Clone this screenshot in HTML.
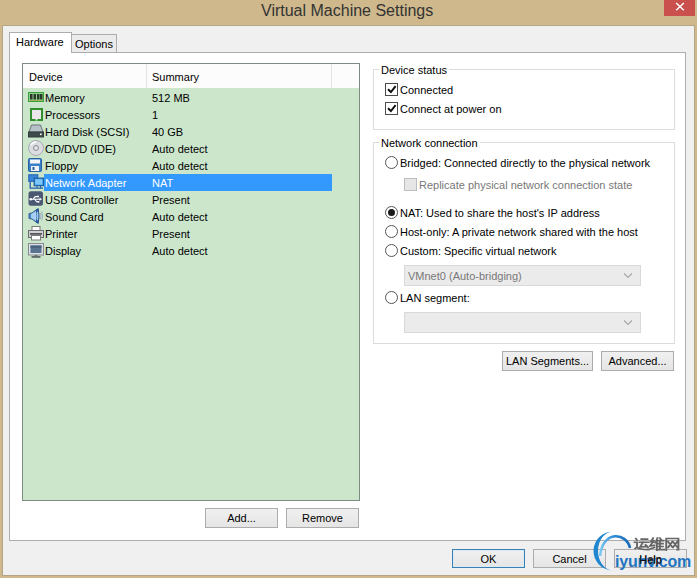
<!DOCTYPE html>
<html><head><meta charset="utf-8">
<style>
*{margin:0;padding:0;box-sizing:border-box}
html,body{width:697px;height:578px;overflow:hidden;background:#CEB88C}
body{position:relative;font-family:"Liberation Sans",sans-serif;font-size:11px;color:#000}
.a{position:absolute}
.t{position:absolute;white-space:nowrap;line-height:13px;height:13px}
#client{position:absolute;left:2px;top:25px;width:693px;height:551px;background:#F0F0F0;border:1px solid #B4A684}
#title{left:261px;top:1px;font-size:16px;line-height:20px;color:#333;height:20px}
#close{left:664px;top:0;width:31px;height:16px;background:#C9504D}
.tabpage{left:9px;top:52px;width:677px;height:489px;background:#fff;border:1px solid #ADADAD}
.tab1{left:9px;top:32px;width:63px;height:21px;background:#fff;border:1px solid #ADADAD;border-bottom:none}
.tab2{left:71px;top:34px;width:46px;height:19px;background:#EBEBEB;border:1px solid #ADADAD}
.list{left:22px;top:63px;width:338px;height:438px;background:#CCE6CC;border:1px solid #7E8A84}
.hdr{left:23px;top:64px;width:336px;height:24px;background:#FCFCFC}
.vsep{width:1px;background:#E3E5E3}
.sel{left:44px;top:174px;width:288px;height:17px;background:#3399FF}
.grp{border:1px solid #DCDCDC}
.lbl{background:#fff;padding:0 2px}
.cb{width:13px;height:13px;border:1px solid #4a4a4a;background:#fff}
.cbd{width:13px;height:13px;border:1px solid #BCBCBC;background:#E6E6E6}
.rb{width:13px;height:13px;border:1px solid #555;border-radius:50%;background:#fff}
.dis{color:#787878}
.combo{width:237px;height:21px;background:#EBEBEB;border:1px solid #D9D9D9}
.btn{height:20px;width:73px;background:linear-gradient(#F0F0F0,#E5E5E5);border:1px solid #ACACAC;text-align:center;line-height:18px;color:#000}
</style></head><body>
<div id="client"></div>
<div class="t" id="title">Virtual Machine Settings</div>
<div class="a" id="close"><svg width="31" height="16" style="position:absolute;left:0;top:0"><path d="M12.2 3 L19.8 10.2 M19.8 3 L12.2 10.2" stroke="#fff" stroke-width="1.5"/></svg></div>

<div class="a tabpage"></div>
<div class="a tab2"></div>
<div class="a tab1"></div>
<div class="t" style="left:16px;top:36px">Hardware</div>
<div class="t" style="left:75px;top:38px">Options</div>

<div class="a list"></div>
<div class="a hdr"></div>
<div class="a vsep" style="left:146px;top:64px;height:24px"></div>
<div class="a vsep" style="left:331px;top:64px;height:24px"></div>
<div class="t" style="left:29px;top:71px">Device</div>
<div class="t" style="left:152px;top:71px">Summary</div>
<div class="a sel"></div>
<svg class="a" style="left:28px;top:89px" width="16" height="16" viewBox="0 0 16 16"><rect x="0.5" y="3.5" width="15" height="9" fill="#8fd08f" stroke="#38a038"/><rect x="2" y="5" width="2.5" height="5.5" fill="#2b3b2b"/><rect x="5.5" y="5" width="2.5" height="5.5" fill="#2b3b2b"/><rect x="9" y="5" width="2.5" height="5.5" fill="#2b3b2b"/><rect x="12" y="5" width="2.5" height="5.5" fill="#2b3b2b"/><rect x="1.5" y="11.2" width="13" height="0.8" fill="#b0a850"/></svg>
<div class="t" style="left:45px;top:92px;color:#000">Memory</div>
<div class="t" style="left:152px;top:92px;color:#000">512 MB</div>
<svg class="a" style="left:28px;top:106px" width="16" height="16" viewBox="0 0 16 16"><rect x="3" y="3" width="11" height="11" fill="#ebe6ea" stroke="#2f8f2f" stroke-width="2"/><rect x="7.5" y="13" width="2" height="1.5" fill="#cde6cc"/></svg>
<div class="t" style="left:45px;top:109px;color:#000">Processors</div>
<div class="t" style="left:152px;top:109px;color:#000">1</div>
<svg class="a" style="left:28px;top:123px" width="16" height="16" viewBox="0 0 16 16"><path d="M3.5 2 H12.5 L15 9 H1 Z" fill="#b8c0c8" stroke="#6a747a" stroke-width="1"/><rect x="0.5" y="9" width="15" height="5" fill="#3e4a4c" stroke="#323c3e" stroke-width="1"/><rect x="12" y="10.5" width="1.6" height="1.6" fill="#fff"/></svg>
<div class="t" style="left:45px;top:126px;color:#000">Hard Disk (SCSI)</div>
<div class="t" style="left:152px;top:126px;color:#000">40 GB</div>
<svg class="a" style="left:28px;top:140px" width="16" height="16" viewBox="0 0 16 16"><circle cx="8" cy="8" r="7.5" fill="#dcdde2" stroke="#a8aab2" stroke-width="1"/><path d="M3 5 A6 6 0 0 1 8 2" stroke="#fff" stroke-width="1.5" fill="none"/><circle cx="8" cy="8" r="2.6" fill="#c8cad0" stroke="#9a9ca4" stroke-width="1"/><circle cx="8" cy="8" r="1.1" fill="#f4f4f6"/></svg>
<div class="t" style="left:45px;top:143px;color:#000">CD/DVD (IDE)</div>
<div class="t" style="left:152px;top:143px;color:#000">Auto detect</div>
<svg class="a" style="left:28px;top:157px" width="16" height="16" viewBox="0 0 16 16"><rect x="0.5" y="1.5" width="13" height="13" rx="1" fill="#3a80c8" stroke="#2a60a0" stroke-width="1"/><rect x="2" y="2.5" width="10" height="4" fill="#f2f4f8"/><rect x="3" y="9" width="8" height="5" fill="#f0f2f6"/><rect x="4.5" y="10" width="2" height="3" fill="#2a5c9c"/></svg>
<div class="t" style="left:45px;top:160px;color:#000">Floppy</div>
<div class="t" style="left:152px;top:160px;color:#000">Auto detect</div>
<svg class="a" style="left:28px;top:174px" width="16" height="16" viewBox="0 0 16 16"><rect x="0.8" y="0.8" width="9" height="6.5" fill="#3a86d6" stroke="#2a6cb8" stroke-width="1.2"/><path d="M2.2 7.5 V14.2 H15" stroke="#1f5ea8" stroke-width="1.3" fill="none"/><rect x="6.2" y="4.2" width="9.2" height="7.4" fill="#5ab4f2" stroke="#1f5ea8" stroke-width="1.3"/><rect x="7.5" y="5.5" width="6.6" height="4.8" fill="#7cc8f6"/><path d="M9 12 V14 M12.5 12 V14" stroke="#1f5ea8" stroke-width="1"/></svg>
<div class="t" style="left:45px;top:177px;color:#fff">Network Adapter</div>
<div class="t" style="left:152px;top:177px;color:#fff">NAT</div>
<svg class="a" style="left:28px;top:191px" width="16" height="16" viewBox="0 0 16 16"><rect x="0.5" y="0.3" width="14.5" height="14.5" rx="2.5" fill="#4b5872"/><path d="M3 8.2 H12 M5.2 8.2 L7.2 5.6 H9.3 M6.8 8.2 L8.6 10.8 H10" stroke="#fff" stroke-width="1.1" fill="none"/><circle cx="2.8" cy="8.2" r="1.3" fill="#fff"/><circle cx="10" cy="5.6" r="1" fill="#fff"/><rect x="9.6" y="10" width="1.7" height="1.7" fill="#fff"/><path d="M11.5 6.6 L14 8.2 L11.5 9.8 Z" fill="#fff"/></svg>
<div class="t" style="left:45px;top:194px;color:#000">USB Controller</div>
<div class="t" style="left:152px;top:194px;color:#000">Present</div>
<svg class="a" style="left:28px;top:208px" width="16" height="16" viewBox="0 0 16 16"><path d="M1 5.5 L4 5 L9.5 0.8 L10.5 0.8 V15.2 L9.5 15.2 L4 11 L1 10.5 Z" fill="#4a88c8" stroke="#2a5a94" stroke-width="0.9"/><ellipse cx="9.3" cy="8" rx="2.2" ry="7" fill="#2a5a94"/><path d="M3 6.2 L8 3 V13 L3 9.8 Z" fill="#a8d0f2"/><ellipse cx="9.4" cy="8" rx="1" ry="4.5" fill="#9cc8ee"/><path d="M12.3 5 Q13.6 8 12.3 11 M13.6 3.5 Q15.8 8 13.6 12.5" stroke="#98a6b8" stroke-width="0.9" fill="none"/></svg>
<div class="t" style="left:45px;top:211px;color:#000">Sound Card</div>
<div class="t" style="left:152px;top:211px;color:#000">Auto detect</div>
<svg class="a" style="left:28px;top:225px" width="16" height="16" viewBox="0 0 16 16"><rect x="4" y="1.5" width="8" height="4.5" fill="#fff" stroke="#7a7a7a" stroke-width="1"/><rect x="0.5" y="5.5" width="15" height="7" fill="#d0d0d4" stroke="#6a6a6e" stroke-width="1"/><rect x="2" y="8.2" width="12" height="1.4" fill="#383840"/><rect x="3.5" y="10.5" width="9" height="4.5" fill="#fff" stroke="#7a7a7a" stroke-width="1"/></svg>
<div class="t" style="left:45px;top:228px;color:#000">Printer</div>
<div class="t" style="left:152px;top:228px;color:#000">Present</div>
<svg class="a" style="left:28px;top:242px" width="16" height="16" viewBox="0 0 16 16"><rect x="0.5" y="1.5" width="15" height="11.5" fill="#dde0e4" stroke="#858b92" stroke-width="1"/><rect x="2.5" y="3.5" width="11" height="7.5" fill="#5a7490"/><rect x="2.5" y="3.5" width="11" height="2.5" fill="#4a6280"/><rect x="6.5" y="13" width="3" height="1.2" fill="#70767c"/><rect x="3.5" y="14.2" width="9" height="1.5" fill="#4a5056"/></svg>
<div class="t" style="left:45px;top:245px;color:#000">Display</div>
<div class="t" style="left:152px;top:245px;color:#000">Auto detect</div>

<div class="a btn" style="left:205px;top:508px">Add...</div>
<div class="a btn" style="left:286px;top:508px">Remove</div>

<div class="a grp" style="left:373px;top:69px;width:302px;height:61px"></div>
<div class="t lbl" style="left:379px;top:64px">Device status</div>
<div class="a cb" style="left:385px;top:83px"><svg width="11" height="11" style="position:absolute;left:0;top:0" viewBox="0 0 11 11"><path d="M2 5.2 L4.9 8 L9.6 2.1" stroke="#111" stroke-width="2" fill="none"/></svg></div>
<div class="a cb" style="left:385px;top:102px"><svg width="11" height="11" style="position:absolute;left:0;top:0" viewBox="0 0 11 11"><path d="M2 5.2 L4.9 8 L9.6 2.1" stroke="#111" stroke-width="2" fill="none"/></svg></div>
<div class="t" style="left:400px;top:84px">Connected</div>
<div class="t" style="left:400px;top:103px">Connect at power on</div>

<div class="a grp" style="left:373px;top:142px;width:302px;height:202px"></div>
<div class="t lbl" style="left:379px;top:137px">Network connection</div>
<div class="a rb" style="left:385px;top:156px"></div>
<div class="t" style="left:400px;top:157px">Bridged: Connected directly to the physical network</div>
<div class="a cbd" style="left:404px;top:178px"></div>
<div class="t dis" style="left:419px;top:179px">Replicate physical network connection state</div>
<div class="a rb" style="left:385px;top:206px"><div style="position:absolute;left:2px;top:2px;width:7px;height:7px;border-radius:50%;background:#1a1a1a"></div></div>
<div class="t" style="left:400px;top:207px">NAT: Used to share the host's IP address</div>
<div class="a rb" style="left:385px;top:225px"></div>
<div class="t" style="left:400px;top:226px">Host-only: A private network shared with the host</div>
<div class="a rb" style="left:385px;top:244px"></div>
<div class="t" style="left:400px;top:245px">Custom: Specific virtual network</div>
<div class="a combo" style="left:404px;top:265px"><svg width="10" height="6" style="position:absolute;right:7px;top:7px" viewBox="0 0 10 6"><path d="M1 0.5 L5 4.5 L9 0.5" stroke="#A8A8A8" stroke-width="1.2" fill="none"/></svg></div>
<div class="t dis" style="left:408px;top:270px">VMnet0 (Auto-bridging)</div>
<div class="a rb" style="left:385px;top:291px"></div>
<div class="t" style="left:400px;top:292px">LAN segment:</div>
<div class="a combo" style="left:404px;top:312px"><svg width="10" height="6" style="position:absolute;right:7px;top:7px" viewBox="0 0 10 6"><path d="M1 0.5 L5 4.5 L9 0.5" stroke="#A8A8A8" stroke-width="1.2" fill="none"/></svg></div>

<div class="a btn" style="left:502px;top:351px;width:91px">LAN Segments...</div>
<div class="a btn" style="left:601px;top:351px">Advanced...</div>

<div class="a btn" style="left:452px;top:549px;height:19px;line-height:17px;padding-top:1px;border-color:#3C7FB1;box-shadow:inset 0 0 0 1px #D8ECF8">OK</div>
<div class="a btn" style="left:533px;top:549px;height:19px;line-height:17px;padding-top:1px">Cancel</div>
<div class="a btn" style="left:614px;top:549px;height:19px;line-height:17px;padding-top:1px">Help</div>
<svg class="a" style="left:0;top:0" width="697" height="578" viewBox="0 0 697 578">
<defs><linearGradient id="ig" gradientUnits="userSpaceOnUse" x1="630" y1="548" x2="600" y2="552"><stop offset="0" stop-color="#1b6cb8"/><stop offset="0.45" stop-color="#2a8ad6"/><stop offset="1" stop-color="#7ccaf2"/></linearGradient></defs>
<path d="M613.5,531.5 A19.5,19.5 0 0 0 612.5,570.5 A15,19.5 0 0 1 613.5,531.5 Z" fill="#1f86cf"/>
<path d="M630,548 C627,533 603,529 600,556" stroke="url(#ig)" stroke-width="2.6" fill="none"/>
<g transform="translate(634,537.5) scale(1.22,1.05)" stroke="#666" stroke-width="1.55" fill="none" stroke-linecap="square">
<path d="M6 1.5 H11 M4.5 4.5 H12 M7.5 4.5 L5 9 L11 8.5 M9.5 7 L11.5 9.5 M1.5 1 L2.5 2.5 M0.5 4.5 H2.5 V9 L1 10.5 M2.5 9.5 Q4 11.5 12 11.5"/>
</g>
<g transform="translate(649.5,537.5) scale(1.22,1.05)" stroke="#666" stroke-width="1.55" fill="none" stroke-linecap="square">
<path d="M3 0.5 L1 4 L3.5 4.5 M3.5 3 L0.5 8 L4 7.5 M0.5 11 L4 9.5 M6.5 0.5 L5 5 M6 3 V12 M8.5 0.5 L9.5 2 M6 3 H11.5 M8.5 3 V11.5 M6 5.8 H11 M6 8.6 H11 M6 11.5 H12"/>
</g>
<g transform="translate(665,537.5) scale(1.22,1.05)" stroke="#666" stroke-width="1.55" fill="none" stroke-linecap="square">
<path d="M1 12 V1 H11 V11.5 L10 11.5 M2.5 4 L6 9 M6 4 L2.5 9.5 M6.5 4 L10 9 M10 4 L6.5 9.5"/>
</g>
</svg>
<div class="t" style="left:615px;top:553px;font-size:16px;font-weight:bold;letter-spacing:-0.2px;line-height:17px;height:17px;color:#2274c0">iyunv.com</div>
<div class="t" style="left:614px;top:554px;width:73px;text-align:center;color:#111">Help</div>
</body></html>
